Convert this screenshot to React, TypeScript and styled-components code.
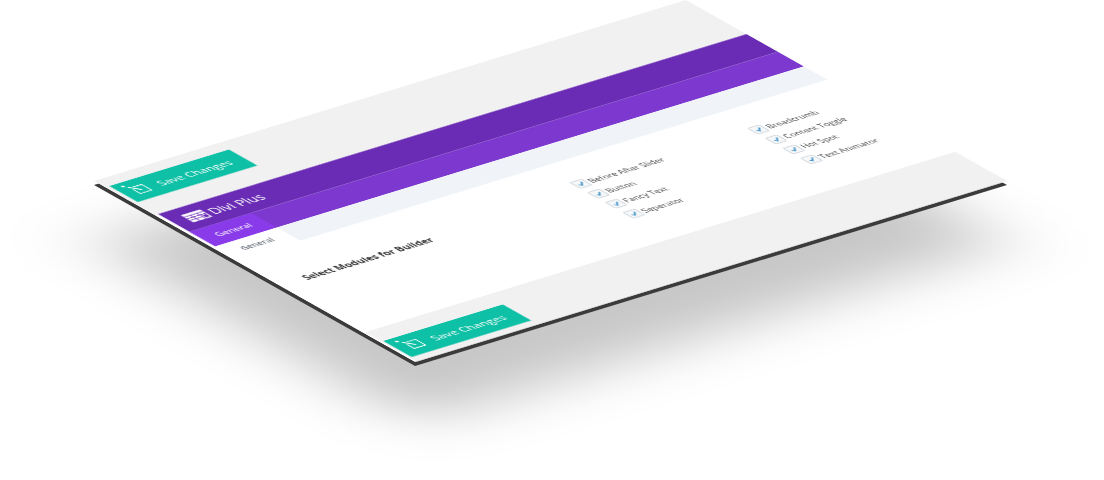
import React from "react";
import styled, { createGlobalStyle } from "styled-components";

const PLANE = "matrix(0.592, -0.181, 0.535, 0.3017, 94, 181)";

const Global = createGlobalStyle`
  html, body { margin: 0; padding: 0; background: #fff; }
  body { font-family: "Open Sans", "Liberation Sans", sans-serif; }
`;

const Scene = styled.div`
  display: grid;
  width: 1104px;
  height: 480px;
  overflow: hidden;
  background: #fff;
`;

const Slab = styled.div<{ $shift: number; $color: string; $blur: number }>`
  grid-area: 1 / 1;
  width: 1000px;
  height: 600px;
  transform-origin: 0 0;
  transform: translateY(${(p) => p.$shift}px) ${PLANE};
  background: ${(p) => p.$color};
  filter: ${(p) => (p.$blur ? `blur(${p.$blur}px)` : "none")};
`;

const Plate = styled.div`
  grid-area: 1 / 1;
  width: 1000px;
  height: 600px;
  transform-origin: 0 0;
  transform: ${PLANE};
  background: #fff;
  display: flex;
  flex-direction: column;
  filter: blur(0.3px);
`;

const TopBar = styled.div`
  height: 113px;
  flex: none;
  box-sizing: border-box;
  background: #f1f1f1;
  padding: 21px 0 0 7px;
`;

const SaveButton = styled.button`
  width: 202px;
  height: 53px;
  box-sizing: border-box;
  border: 0;
  background: #0ec0a5;
  color: #fff;
  display: flex;
  align-items: center;
  gap: 8px;
  padding: 0 0 0 10px;
  font: 400 19px "Open Sans", sans-serif;
  white-space: nowrap;
`;

const Header = styled.div`
  height: 59px;
  flex: none;
  margin-left: 6px;
  background: #6a2cb4;
  color: #fff;
  display: flex;
  align-items: center;
  gap: 6px;
  padding-left: 22px;
  font-size: 22.5px;
`;

const TabBar = styled.div`
  height: 48px;
  flex: none;
  margin-left: 6px;
  background: #7d39cf;
  display: flex;
`;

const Tab = styled.div`
  width: 104px;
  background: #893be9;
  color: #fff;
  font-size: 16px;
  display: flex;
  align-items: center;
  justify-content: center;
`;

const SubBar = styled.div`
  height: 44px;
  flex: none;
  margin-left: 6px;
  display: flex;
`;

const SubTab = styled.div`
  width: 104px;
  background: #fff;
  color: #6b7380;
  font-size: 14px;
  font-weight: 600;
  display: flex;
  align-items: center;
  padding-left: 24px;
  box-sizing: border-box;
`;

const SubFill = styled.div`
  flex: 1;
  background: #f0f4f9;
`;

const Body = styled.div`
  flex: 1;
  display: grid;
  grid-template-columns: 477px 300px 182px;
  padding: 51px 0 0 41px;
`;

const Label = styled.div`
  padding-top: 21px;
  font-size: 16.5px;
  font-weight: 700;
  color: #333;
  white-space: nowrap;
`;

const Column = styled.ul`
  list-style: none;
  margin: 0;
  padding: 0;
  display: flex;
  flex-direction: column;
  gap: 11px;
`;

const Item = styled.li`
  height: 22px;
  display: flex;
  align-items: center;
  gap: 4px;
  font-size: 14.5px;
  color: #444;
  white-space: nowrap;
`;

const Box = styled.span`
  width: 20px;
  height: 20px;
  box-sizing: border-box;
  border: 1.5px solid #a9b4bd;
  border-radius: 2px;
  background: #f6f8fa;
  flex: none;
  display: flex;
  align-items: center;
  justify-content: center;
`;

const Footer = styled.div`
  height: 97px;
  flex: none;
  box-sizing: border-box;
  margin-left: 3px;
  background: #f1f1f1;
  padding: 31px 0 0 3px;
`;

const Check = () => (
  <svg width="16" height="16" viewBox="0 0 16 16" fill="none">
    <path d="M3.5 9 L6.5 12 L12.5 4" stroke="#3a8fc4" strokeWidth="2.2" />
  </svg>
);

const SaveIcon = () => (
  <svg width="40" height="40" viewBox="0 0 40 40" fill="none" stroke="#fff" strokeWidth="1.8">
    <path d="M14 10.5 H28.5 V29.5 H9.5 V16" />
    <path d="M8 8 L19 22" strokeWidth="2.6" />
    <circle cx="4" cy="3" r="2.4" fill="#fff" stroke="none" />
  </svg>
);

const TableIcon = () => (
  <svg width="33" height="25" viewBox="0 0 36 26">
    <rect width="36" height="26" rx="1.5" fill="#fff" />
    <path
      d="M0 7 H36 M0 13 H36 M0 19 H24 M12 7 V26 M24 7 V26"
      stroke="#6a2cb4"
      strokeWidth="1.6"
      fill="none"
    />
    <rect x="26.5" y="15" width="7" height="8" fill="#6a2cb4" />
  </svg>
);

const Save = () => (
  <SaveButton>
    <SaveIcon />
    Save Changes
  </SaveButton>
);

const left = ["Before After Slider", "Button", "Fancy Text", "Seperator"];
const right = ["Breadcrumb", "Content Toggle", "Hot Spot", "Text Animator"];

const Modules = ({ names }: { names: string[] }) => (
  <Column>
    {names.map((n) => (
      <Item key={n}>
        <Box>
          <Check />
        </Box>
        {n}
      </Item>
    ))}
  </Column>
);

export default function App() {
  return (
    <>
      <Global />
      <Scene>
        <Slab $shift={62} $color="rgba(0,0,0,0.22)" $blur={58} />
        <Slab $shift={4} $color="#3b3b3b" $blur={0} />
        <Plate>
          <TopBar>
            <Save />
          </TopBar>
          <Header>
            <TableIcon />
            Divi Plus
          </Header>
          <TabBar>
            <Tab>General</Tab>
          </TabBar>
          <SubBar>
            <SubTab>General</SubTab>
            <SubFill />
          </SubBar>
          <Body>
            <Label>Select Modules for Builder</Label>
            <Modules names={left} />
            <Modules names={right} />
          </Body>
          <Footer>
            <Save />
          </Footer>
        </Plate>
      </Scene>
    </>
  );
}
